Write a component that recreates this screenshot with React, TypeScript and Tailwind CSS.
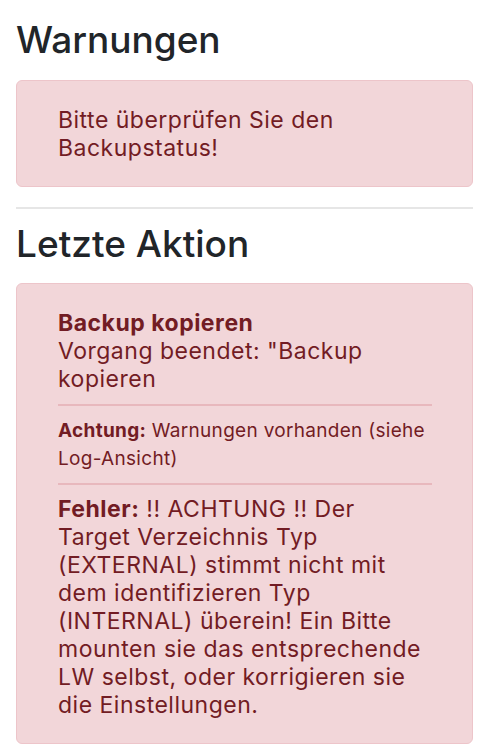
export default function App() {
  return (
    <div className="pl-4 pr-[13px] pt-[17px] pb-4 font-['Inter',sans-serif]">
      {/* Warnungen */}
      <h2 className="text-[37px] leading-[46px] font-medium text-[#212529] mb-[17px]">Warnungen</h2>
      <div className="bg-[#f2d6d9] border border-[#edc5ca] rounded-md pl-[41px] pr-[40px] pt-[25px] pb-[24px] text-[#721c24] text-[23px] leading-[28px] tracking-[0.5px]">
        Bitte überprüfen Sie den Backupstatus!
      </div>

      <hr className="mt-[20px] mb-[12px] border-0 h-[2px] bg-[#e6e6e6]" />

      {/* Letzte Aktion */}
      <h2 className="text-[37px] leading-[46px] font-medium text-[#212529] mb-[16px]">Letzte Aktion</h2>
      <div className="bg-[#f2d6d9] border border-[#edc5ca] rounded-md pl-[41px] pr-[40px] pt-[25px] pb-[24px] text-[#721c24]">
        <div className="text-[23px] leading-[28px] tracking-[0.5px]">
          <p className="font-bold">Backup kopieren</p>
          <p>Vorgang beendet: "Backup kopieren</p>
        </div>
        <hr className="my-[11px] border-0 h-[2px] bg-[#e8b8bd]" />
        <p className="text-[19px] leading-[28px] tracking-[0.3px]">
          <span className="font-bold">Achtung:</span> Warnungen vorhanden (siehe Log-Ansicht)
        </p>
        <hr className="my-[10px] border-0 h-[2px] bg-[#e8b8bd]" />
        <p className="text-[23px] leading-[28px] tracking-[0.5px]">
          <span className="font-bold">Fehler:</span> !! ACHTUNG !! Der Target Verzeichnis Typ (EXTERNAL) stimmt nicht mit dem identifizieren Typ (INTERNAL) überein! Ein Bitte mounten sie das entsprechende LW selbst, oder korrigieren sie die Einstellungen.
        </p>
      </div>
    </div>
  );
}
